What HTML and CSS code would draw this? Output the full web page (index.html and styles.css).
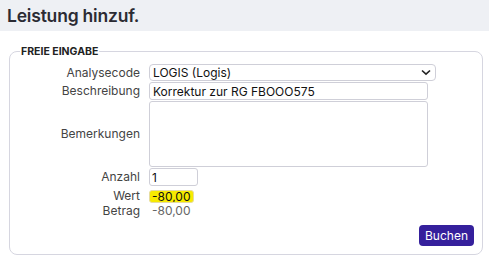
FILE: index.html
```html
<!DOCTYPE html>
<html lang="de">
<head>
    <meta charset="UTF-8">
    <title>Leistung hinzufügen</title>
    <link rel="stylesheet" href="styles.css">
</head>
<body>
    <div class="header">
        <h1>Leistung hinzuf.</h1>
    </div>

    <fieldset class="box">
        <legend>Freie Eingabe</legend>
        <div class="form-grid">
            <label for="code">Analysecode</label>
            <div class="select-wrap">
                <select id="code">
                    <option>LOGIS (Logis)</option>
                </select>
                <svg class="chevron" width="10" height="7" viewBox="0 0 10 7"><path d="M1 1.5 L5 5.2 L9 1.5" fill="none" stroke="#222" stroke-width="1.6"/></svg>
            </div>

            <label for="desc">Beschreibung</label>
            <input type="text" id="desc" class="field-wide" value="Korrektur zur RG FBOOO575">

            <label for="remarks">Bemerkungen</label>
            <textarea id="remarks" class="field-wide"></textarea>

            <label for="count">Anzahl</label>
            <input type="text" id="count" class="field-small" value="1">

            <label for="value" class="row-low">Wert</label>
            <input type="text" id="value" class="field-value row-low" value="-80,00">

            <label>Betrag</label>
            <span class="amount">-80,00</span>
        </div>
        <div class="actions">
            <button id="book">Buchen</button>
        </div>
    </fieldset>
</body>
</html>
```

FILE: styles.css
```css
body {
    margin: 0;
    font-family: Inter, "Noto Sans", sans-serif;
    font-size: 12px;
    color: #333;
    background: #fff;
}
.header {
    background-color: #eef0f4;
    height: 31px;
    padding-left: 7px;
    display: flex;
    align-items: center;
}
.header h1 {
    margin: 0;
    font-size: 17.5px;
    font-weight: 600;
    color: #2b2b33;
    letter-spacing: -0.2px;
}
.box {
    margin: 14px 6px 0 9px;
    padding: 6px 8px 8px 8px;
    border: 1px solid #d6d6e0;
    border-radius: 8px;
}
.box legend {
    margin-left: 2px;
    padding: 0 1px;
    font-size: 10.5px;
    font-weight: 700;
    text-transform: uppercase;
    color: #222;
}
.form-grid {
    display: grid;
    grid-template-columns: 122px 1fr;
    grid-template-rows: 17px 18px 66px 18px 17px 11px;
    column-gap: 9px;
    row-gap: 1px;
    align-items: center;
}
.form-grid label {
    text-align: right;
    color: #444;
    font-size: 12px;
    line-height: 14px;
}
.form-grid .row-low {
    align-self: end;
    margin-bottom: 1px;
}
.form-grid input,
.form-grid select,
.form-grid textarea {
    font-family: inherit;
    font-size: 12px;
    color: #111;
    border: 1px solid #cfcfd8;
    border-radius: 3px;
    background: #fff;
    box-sizing: border-box;
    margin: 0;
}
.select-wrap {
    position: relative;
    width: 287px;
    height: 17px;
}
.select-wrap select {
    width: 100%;
    height: 17px;
    padding: 0 0 0 3px;
    appearance: none;
    border-radius: 4px;
}
.chevron {
    position: absolute;
    right: 5px;
    top: 5px;
}
.field-wide {
    width: 279px;
    height: 18px;
    padding: 0 3px;
}
textarea.field-wide {
    height: 66px;
    resize: none;
}
.field-small {
    width: 49px;
    height: 18px;
    padding: 0 2px;
}
.form-grid .field-value {
    width: 45px;
    height: 13px;
    padding: 0 2px;
    background: #f7ea00;
    border-color: #e6dca0;
}
.amount {
    color: #666;
    padding-left: 3px;
    line-height: 14px;
}
.actions {
    margin-top: 9px;
    display: flex;
    justify-content: flex-end;
}
#book {
    background-color: #35209c;
    color: #fff;
    border: none;
    border-radius: 4px;
    font-family: inherit;
    font-size: 12px;
    width: 55px;
    height: 21px;
    padding: 0;
    cursor: pointer;
}
```
